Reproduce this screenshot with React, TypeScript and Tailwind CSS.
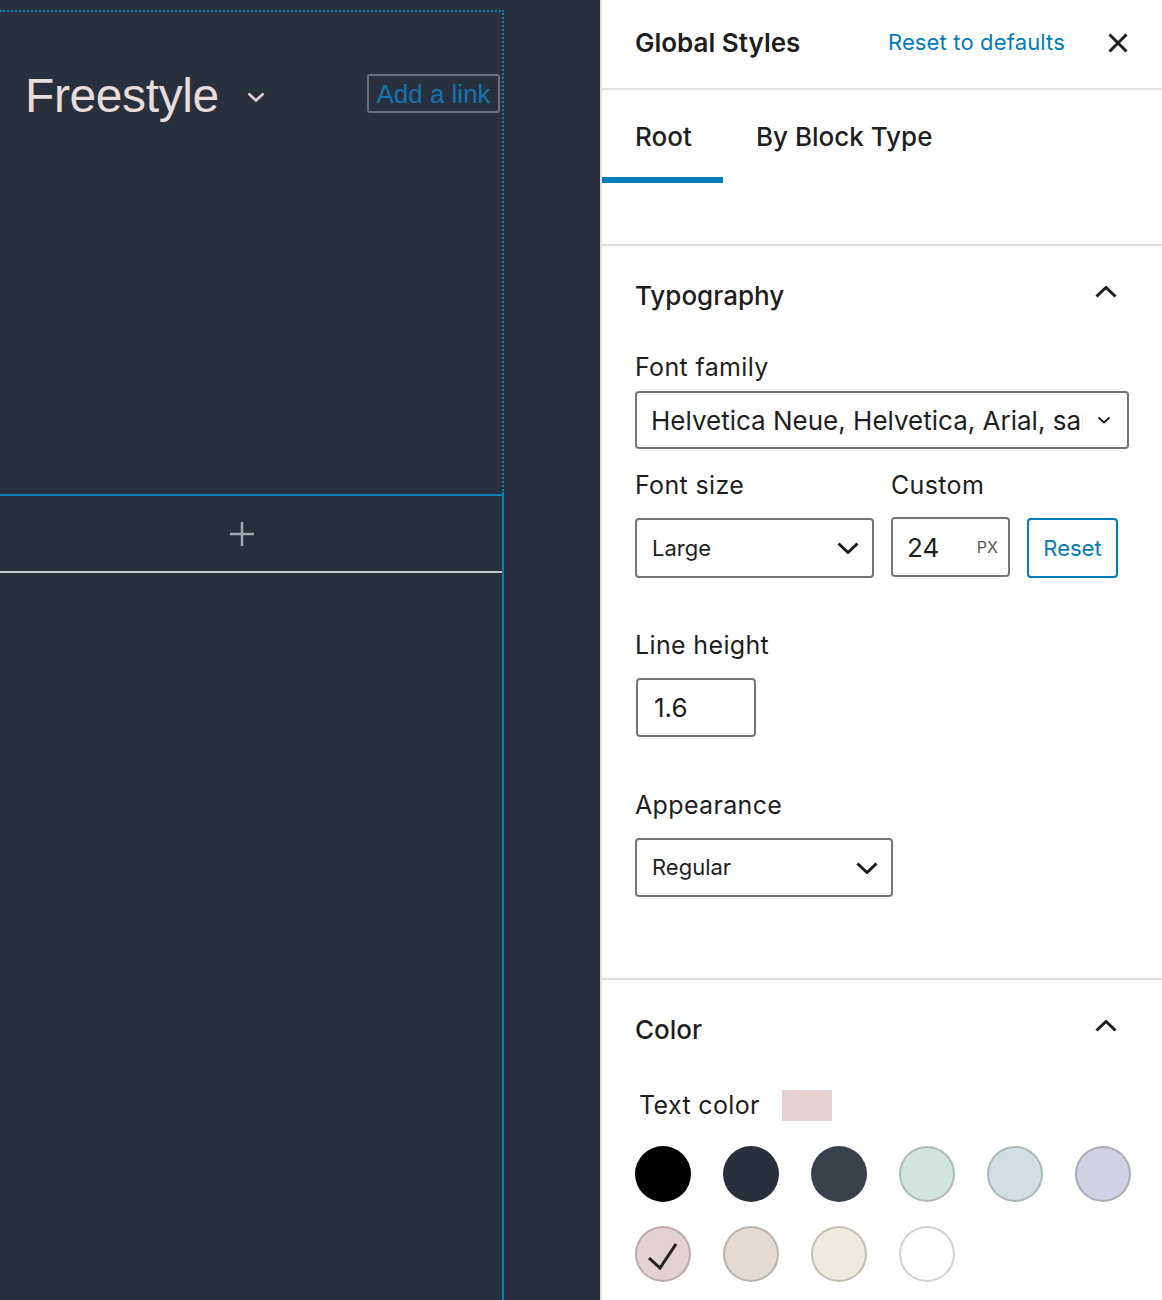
import React from "react";

const Chevron = ({ dir = "down", w = 22, h = 12, stroke = 3, color = "#1e1e1e" }: { dir?: "up" | "down"; w?: number; h?: number; stroke?: number; color?: string }) => {
  const pts = dir === "down" ? `1.5,1.5 ${w / 2},${h - 1.5} ${w - 1.5},1.5` : `1.5,${h - 1.5} ${w / 2},1.5 ${w - 1.5},${h - 1.5}`;
  return (
    <svg width={w} height={h} viewBox={`0 0 ${w} ${h}`} fill="none" className="block">
      <polyline points={pts} stroke={color} strokeWidth={stroke} strokeLinecap="butt" strokeLinejoin="miter" />
    </svg>
  );
};

const colors = [
  "#000000",
  "#28303d",
  "#39414d",
  "#d1e4dd",
  "#d1dfe4",
  "#d1d1e4",
  "#e4d1d1",
  "#e4dad1",
  "#eeeadd",
  "#ffffff",
];

export default function App() {
  return (
    <div className="flex w-[1162px] h-[1300px] overflow-hidden" style={{ fontFamily: "Inter, 'Noto Sans', sans-serif" }}>
      {/* Canvas */}
      <div className="w-[600px] h-full bg-[#28303d] pt-[10px] flex flex-col shrink-0">
        <div className="w-[504px] h-[484px] border-t-2 border-r-2 border-dotted border-[#0a7fbf] pt-[62px]">
          <div className="flex items-start justify-between pl-[25px] pr-[2px]">
            <div className="flex items-center -mt-[2px]">
              <span
                className="text-[48px] leading-[48px] text-[#e9dcdc] tracking-[-0.4px]"
                style={{ fontFamily: "'Liberation Sans', Arial, sans-serif" }}
              >
                Freestyle
              </span>
              <span className="ml-[28px] mt-[1px]">
                <Chevron w={18} h={10} stroke={2.5} color="#e4d1d1" />
              </span>
            </div>
            <div
              className="h-[39px] w-[133px] border-2 border-[#6b707c] rounded-[3px] flex items-center justify-center pt-[2px] text-[26px] text-[#1274b0]"
              style={{ fontFamily: "'Liberation Sans', Arial, sans-serif" }}
            >
              Add a link
            </div>
          </div>
        </div>
        <div className="w-[504px] flex-1 border-t-2 border-r-2 border-[#0a7fbf]">
          <div className="h-[77px] border-b-2 border-[#c5c8ce] flex items-center pl-[230px]">
            <svg width="24" height="24" viewBox="0 0 24 24" fill="none">
              <path d="M12 0V24M0 12H24" stroke="#a3a7b0" strokeWidth="2.5" />
            </svg>
          </div>
        </div>
      </div>

      {/* Sidebar */}
      <div className="flex-1 min-w-0 h-full bg-white border-l-2 border-[#e0e0e0] text-[#1e1e1e]">
        {/* Header */}
        <div className="h-[90px] border-b-2 border-[#e0e0e0] flex items-center pl-[33px] pr-[34px] pb-[3px]">
          <span className="text-[26px] font-semibold">Global Styles</span>
          <span className="ml-auto text-[22px] text-[#007cba] tracking-[0.15px]">Reset to defaults</span>
          <span className="ml-[43px] mt-[1px]">
            <svg width="20" height="20" viewBox="0 0 20 20" fill="none" className="block">
              <path d="M1.5 1.5L18.5 18.5M18.5 1.5L1.5 18.5" stroke="#1e1e1e" strokeWidth="3" />
            </svg>
          </span>
        </div>

        {/* Tabs */}
        <div className="h-[156px] border-b-2 border-[#e0e0e0]">
          <div className="flex h-[93px]">
            <div className="w-[121px] pl-[33px] border-b-[6px] border-[#007cba] flex items-center pt-[5px] text-[26px] font-medium">
              Root
            </div>
            <div className="pl-[33px] flex items-center text-[26px] font-medium">By Block Type</div>
          </div>
        </div>

        {/* Typography */}
        <div className="border-b-2 border-[#e0e0e0] px-[33px] pb-[81px]">
          <div className="h-[98px] flex items-center justify-between">
            <span className="text-[26px] font-medium">Typography</span>
            <span className="mr-[12px] -mt-[6px]">
              <Chevron dir="up" w={22} h={12} stroke={3} />
            </span>
          </div>
          <div className="mt-[7px] text-[25px] leading-[32px] tracking-[0.35px]">Font family</div>
          <div className="mt-[8px] h-[58px] border-2 border-[#757575] rounded-[4px] flex items-center pl-[14px] pr-[16px]">
            <div className="flex-1 min-w-0 overflow-hidden whitespace-nowrap text-[26px] mr-[14px]">
              Helvetica Neue, Helvetica, Arial, sans-serif
            </div>
            <Chevron w={14} h={8} stroke={2} />
          </div>

          <div className="mt-[20px] flex text-[25px] leading-[32px] tracking-[0.35px]">
            <span className="w-[256px]">Font size</span>
            <span>Custom</span>
          </div>
          <div className="mt-[17px] flex items-center">
            <div className="w-[239px] h-[60px] border-2 border-[#757575] rounded-[4px] flex items-center justify-between pl-[15px] pr-[13px]">
              <span className="text-[22px]">Large</span>
              <Chevron w={22} h={12} stroke={3} />
            </div>
            <div className="ml-[17px] w-[119px] h-[60px] -mt-[2px] border-2 border-[#757575] rounded-[4px] flex items-center justify-between pl-[14px] pr-[10px]">
              <span className="text-[26px]">24</span>
              <span className="text-[16px] text-[#555]">PX</span>
            </div>
            <div className="ml-[17px] w-[91px] h-[60px] border-2 border-[#007cba] rounded-[4px] flex items-center justify-center text-[22px] text-[#007cba]">
              Reset
            </div>
          </div>

          <div className="mt-[51px] text-[25px] leading-[32px] tracking-[0.35px]">Line height</div>
          <div className="mt-[17px] ml-[1px] w-[120px] h-[59px] border-2 border-[#757575] rounded-[4px] flex items-center pl-[16px] text-[26px]">
            1.6
          </div>

          <div className="mt-[52px] text-[25px] leading-[32px] tracking-[0.35px]">Appearance</div>
          <div className="mt-[17px] w-[258px] h-[59px] border-2 border-[#757575] rounded-[4px] flex items-center justify-between pl-[15px] pr-[13px]">
            <span className="text-[22px]">Regular</span>
            <Chevron w={22} h={12} stroke={3} />
          </div>
        </div>

        {/* Color */}
        <div className="px-[33px]">
          <div className="h-[98px] flex items-center justify-between">
            <span className="text-[26px] font-medium">Color</span>
            <span className="mr-[12px] -mt-[6px]">
              <Chevron dir="up" w={22} h={12} stroke={3} />
            </span>
          </div>
          <div className="mt-[11px] h-[32px] flex items-center pl-[4px]">
            <span className="w-[143px] text-[25px] leading-[32px] tracking-[0.35px]">Text color</span>
            <span className="w-[50px] h-[31px] bg-[#e4d1d1]"></span>
          </div>
          <div className="mt-[25px] grid grid-cols-6 w-[496px] gap-y-[24px] gap-x-[32px]">
            {colors.map((c, i) => (
              <div
                key={c}
                className={`w-[56px] h-[56px] rounded-full flex items-center justify-center ${
                  i < 3 ? "" : "shadow-[inset_0_0_0_2px_rgba(0,0,0,0.18)]"
                }`}
                style={{ backgroundColor: c }}
              >
                {i === 6 && (
                  <svg width="56" height="56" viewBox="0 0 56 56" fill="none">
                    <polyline points="14,32 25,42 41,18" stroke="#1e1e1e" strokeWidth="3" fill="none" />
                  </svg>
                )}
              </div>
            ))}
          </div>
        </div>
      </div>
    </div>
  );
}
